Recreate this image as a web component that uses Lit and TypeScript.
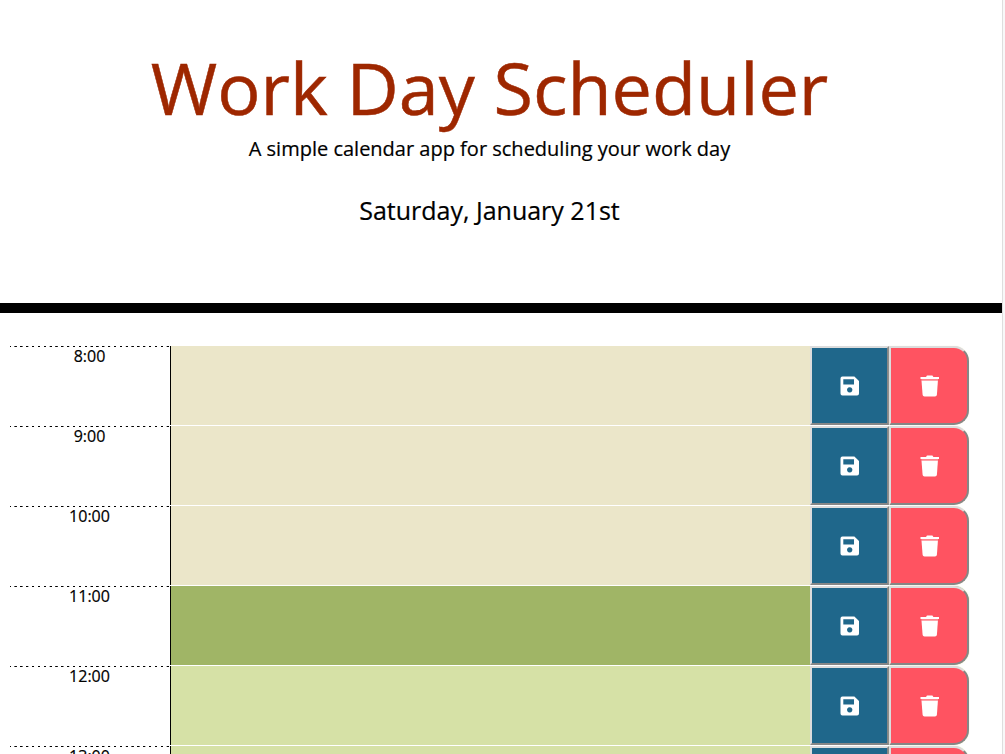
import { LitElement, html, css } from "lit";
import { customElement, property } from "lit/decorators.js";

@customElement("time-block")
class TimeBlock extends LitElement {
  @property() hour = "";
  @property({ reflect: true }) period = "past";

  static styles = css`
    :host {
      display: grid;
      grid-template-columns: 161px 639px 79px 81px;
      height: 80px;
      --slot: #ebe6c9;
    }
    :host([period="present"]) {
      --slot: #a0b566;
    }
    :host([period="future"]) {
      --slot: #d6e1a6;
    }
    .hour {
      box-sizing: border-box;
      height: 79px;
      padding-right: 1px;
      border-right: 1px solid #000;
      text-align: center;
      font-size: 16px;
      line-height: 20px;
      -webkit-text-stroke: 0.2px #000;
      background: repeating-linear-gradient(90deg, #000 0 1.2px, #fff 1.7px 4.9px, #000 5.2px 5.85px) -0.6px 0 / 101% 1px no-repeat;
    }
    .entry {
      background: var(--slot);
      height: 79px;
    }
    button {
      box-sizing: border-box;
      width: 79px;
      height: 79px;
      margin: 0;
      padding: 0 0 0 1px;
      border: 2px solid;
      border-color: #dcdcdc #868686 #868686 #dcdcdc;
      color: #fff;
      display: flex;
      align-items: center;
      justify-content: center;
    }
    .save {
      background: #1f678b;
    }
    .remove {
      width: 80px;
      padding: 0 0 0 2px;
      background: #ff5361;
      border-radius: 0 15px 15px 0;
      box-shadow: 0 0 1px var(--slot);
    }
    svg {
      display: block;
      fill: currentColor;
    }
  `;

  render() {
    return html`
      <div class="hour">${this.hour}</div>
      <div class="entry"></div>
      <button class="save" aria-label="Save">
        <svg width="20" height="20" viewBox="0 0 20 20">
          <path fill-rule="evenodd" d="M2.4 .5H14.4L19 5V17.6Q19 19.5 17.1 19.5H2.4Q.5 19.5 .5 17.6V2.4Q.5 .5 2.4 .5ZM3.3 3.3V8.6H14V3.3ZM9.7 11.2a2.7 2.7 0 1 0 .01 0Z" />
        </svg>
      </button>
      <button class="remove" aria-label="Delete">
        <svg width="20" height="22" viewBox="0 0 20 22">
          <path d="M.5 2.1H6L7 .5H12.4L13.4 2.1H19V4.1H.5Z" />
          <path d="M1.5 5.8H17.9L16.9 19.8Q16.7 21.6 15 21.6H4.5Q2.8 21.6 2.6 19.8Z" />
          <path opacity=".3" d="M1.4 4H18V6H1.4Z" />
        </svg>
      </button>
    `;
  }
}

@customElement("app-root")
class AppRoot extends LitElement {
  static styles = css`
    :host {
      display: block;
      box-sizing: border-box;
      height: 754px;
      width: 1005px;
      padding-right: 3px;
      overflow: hidden;
      font-family: "Open Sans", sans-serif;
      color: #000;
      background: linear-gradient(90deg, #fff 1002px, #dedede 1002px 1003px, #f8f8f8 1003px);
    }
    header {
      box-sizing: border-box;
      height: 313px;
      border-bottom: 10px solid #000;
      padding: 38px 23px 0 0;
      text-align: center;
    }
    h1 {
      margin: 0;
      font-size: 72px;
      line-height: 98px;
      font-weight: 400;
      color: #9e2700;
      -webkit-text-stroke: 0.5px #9e2700;
    }
    p {
      margin: 0;
      -webkit-text-stroke: 0.2px #000;
    }
    .lead {
      margin-top: 1px;
      font-size: 20px;
      line-height: 24px;
    }
    .day {
      margin-top: 32px;
      font-size: 25px;
      line-height: 34px;
    }
    main {
      width: 960px;
      padding: 33px 0 0 10px;
    }
  `;

  private blocks = [
    ["8:00", "past"],
    ["9:00", "past"],
    ["10:00", "past"],
    ["11:00", "present"],
    ["12:00", "future"],
    ["13:00", "future"],
  ];

  render() {
    return html`
      <header>
        <h1>Work Day Scheduler</h1>
        <p class="lead">A simple calendar app for scheduling your work day</p>
        <p class="day">Saturday, January 21st</p>
      </header>
      <main>
        ${this.blocks.map(([hour, period]) => html`<time-block .hour=${hour} period=${period}></time-block>`)}
      </main>
    `;
  }
}
